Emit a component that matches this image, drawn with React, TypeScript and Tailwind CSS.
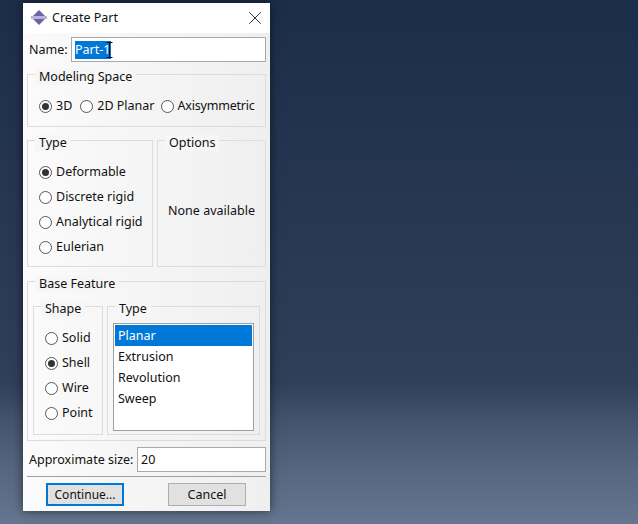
import React from "react";
import { X } from "lucide-react";

const font = "font-['Noto_Sans','Open_Sans',sans-serif] text-[12.5px] leading-[18px] text-[#111]";

function Radio({ label, checked, className }: { label: string; checked?: boolean; className?: string }) {
  return (
    <label className={`flex items-center gap-[4px] whitespace-nowrap ${className ?? ""}`}>
      <span className="flex h-[13px] w-[13px] shrink-0 items-center justify-center rounded-full border border-[#555] bg-white">
        {checked && <span className="h-[7px] w-[7px] rounded-full bg-[#333]" />}
      </span>
      <span>{label}</span>
    </label>
  );
}

function Group({
  title,
  className,
  children,
}: {
  title: string;
  className: string;
  children?: React.ReactNode;
}) {
  return (
    <div className={`relative border border-[#dcdcdc] ${className}`}>
      <span className="absolute top-[-6px] left-[7px] bg-[#f6f6f6] px-[4px] leading-[16px] whitespace-nowrap">{title}</span>
      {children}
    </div>
  );
}

function PartIcon() {
  return (
    <svg width="16" height="16" viewBox="0 0 16 16" className="shrink-0">
      <path d="M8 0 L14 6 H2 Z" fill="#6a63a8" />
      <path d="M8 15 L2 9 H14 Z" fill="#6a63a8" />
      <rect x="0" y="6" width="16" height="3" fill="#b5b3d6" />
    </svg>
  );
}

export default function App() {
  return (
    <div className="h-[524px] w-[638px] overflow-hidden bg-[linear-gradient(to_bottom,#1c2d4a_0px,#2e3e58_360px,#303f5a_383px,#43536d_420px,#566680_470px,#667690_524px)] pt-[3px] pl-[23px]">
      <div className={`flex h-[508px] w-[247px] flex-col bg-white shadow-[0_0_10px_rgba(0,0,0,0.55)] ${font}`}>
        {/* Title bar */}
        <div className="flex h-[30px] shrink-0 items-center pr-[4px] pb-[1px] pl-[8px]">
          <PartIcon />
          <span className="ml-[5px] flex-1">Create Part</span>
          <X size={22} strokeWidth={1} className="text-[#222]" />
        </div>

        <div className="flex flex-1 flex-col bg-gradient-to-r from-[#fbfbfb] to-[#efefef] px-[4px]">
          {/* Name */}
          <div className="mt-[4px] flex h-[25px] items-center">
            <span className="ml-[2px] w-[42px]">Name:</span>
            <div className="relative flex h-[25px] flex-1 items-center border border-[#a9a9a9] bg-white pl-[3px]">
              <span className="bg-[#0078d7] pr-[1px] text-white">Part-1</span>
              {/* text cursor */}
              <svg width="7" height="16" viewBox="0 0 7 16" className="absolute top-[4px] left-[34px]">
                <path d="M0.5 0.5H6.5M3.5 0.5V15.5M0.5 15.5H6.5" stroke="#111" strokeWidth="1" fill="none" />
              </svg>
            </div>
          </div>

          <Group title="Modeling Space" className="mt-[12px] flex h-[53px] items-center pt-[11px] pl-[11px]">
            <Radio label="3D" checked />
            <Radio label="2D Planar" className="ml-[8px]" />
            <Radio label="Axisymmetric" className="ml-[6px] tracking-[-0.2px]" />
          </Group>

          <div className="mt-[13px] flex h-[127px] gap-[4px]">
            <Group title="Type" className="flex w-[126px] flex-col gap-[7px] pt-[22px] pl-[11px]">
              <Radio label="Deformable" checked />
              <Radio label="Discrete rigid" />
              <Radio label="Analytical rigid" />
              <Radio label="Eulerian" />
            </Group>
            <Group title="Options" className="flex flex-1 items-center justify-center pt-[15px]">
              None available
            </Group>
          </div>

          <Group title="Base Feature" className="mt-[14px] flex h-[160px] gap-[4px] pt-[24px] pl-[5px]">
            <Group title="Shape" className="flex h-[129px] w-[70px] flex-col gap-[7px] pt-[22px] pl-[11px]">
              <Radio label="Solid" />
              <Radio label="Shell" checked />
              <Radio label="Wire" />
              <Radio label="Point" />
            </Group>
            <Group title="Type" className="h-[129px] w-[153px] pt-[16px] pl-[5px]">
              <div className="h-[108px] w-[141px] border border-[#a0a0a0] bg-white p-[1px]">
                <div className="flex h-[21px] items-center bg-[#0078d7] pl-[3px] text-white">Planar</div>
                <div className="flex h-[21px] items-center pl-[3px]">Extrusion</div>
                <div className="flex h-[21px] items-center pl-[3px]">Revolution</div>
                <div className="flex h-[21px] items-center pl-[3px]">Sweep</div>
              </div>
            </Group>
          </Group>

          {/* Approximate size */}
          <div className="mt-[6px] flex h-[25px] items-center">
            <span className="ml-[2px] w-[108px] whitespace-nowrap">Approximate size:</span>
            <div className="flex h-[25px] flex-1 items-center border border-[#a9a9a9] bg-white pl-[3px]">20</div>
          </div>

          <div className="mt-[4px] h-px bg-[#a0a0a0]" />

          {/* Buttons */}
          <div className="mt-[6px] flex pl-[19px]">
            <button className="h-[23px] w-[78px] border-2 border-[#0078d7] bg-[#e1e1e1] text-[12px]">Continue...</button>
            <button className="ml-[44px] h-[23px] w-[78px] border border-[#adadad] bg-[#e1e1e1]">Cancel</button>
          </div>
        </div>
      </div>
    </div>
  );
}
